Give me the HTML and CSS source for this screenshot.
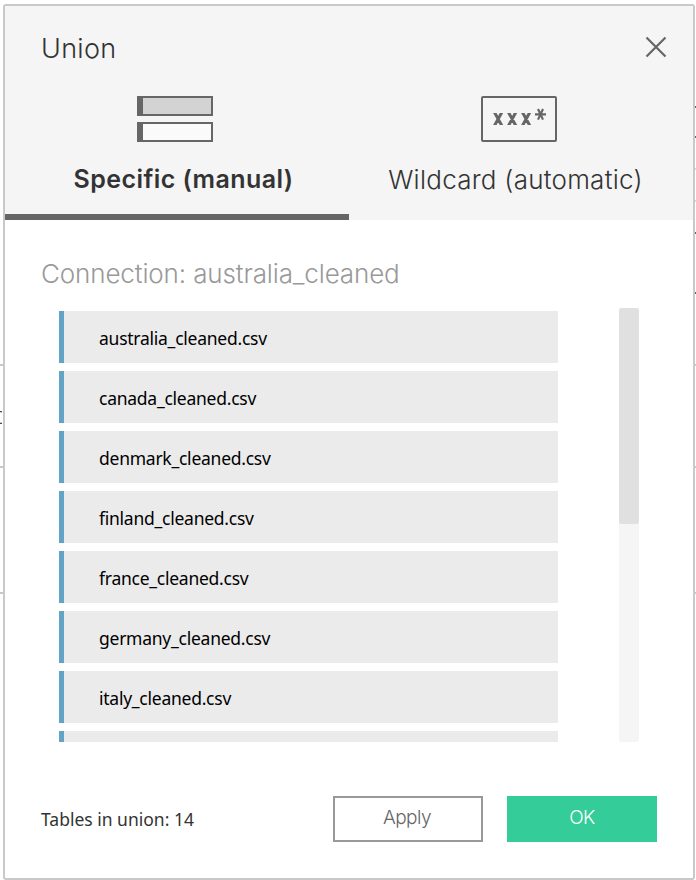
FILE: index.html
```html
<!DOCTYPE html>
<html lang="en">
<head>
<meta charset="utf-8">
<title>Union</title>
<link rel="stylesheet" href="styles.css">
</head>
<body>
<svg class="backdrop" width="696" height="880" viewBox="0 0 696 880" shape-rendering="crispEdges" aria-hidden="true">
  <path d="M0 365H696M0 467H696M0 593H696" stroke="#c8c8c8" stroke-width="2"/>
  <path d="M695 169H696M695 201H696" stroke="#d8d8d8" stroke-width="2"/>
  <path d="M695 107H696M695 137H696M695 233H696M695 293H696" stroke="#666" stroke-width="2"/>
  <path d="M0 411.500H2M0 423.500H2" stroke="#444b52" stroke-width="1"/>
  <path d="M0 412.500H2M0 422.500H2" stroke="#b8cbd8" stroke-width="1"/>
</svg>
<main class="dialog">
  <header class="head">
    <div class="title-row">
      <h1 class="title"><span>Union</span></h1>
      <button class="close" aria-label="Close"><svg width="22" height="22" viewBox="0 0 22 22"><path d="M1.500 1.500L20.500 20.500M20.500 1.500L1.500 20.500" stroke="#666" stroke-width="2.200" fill="none"/></svg></button>
    </div>
    <nav class="tabs">
      <div class="tab active">
        <svg width="76" height="46" viewBox="0 0 76 46" shape-rendering="crispEdges"><path d="M0 0H76V20H0zM0 26H76V46H0z" fill="#666"/><path d="M6 2H74V18H6z" fill="#d3d3d3"/><path d="M6 28H74V44H6z" fill="#fafafa"/></svg>
        <span class="label manual">Specific (manual)</span>
      </div>
      <div class="tab">
        <svg width="76" height="46" viewBox="0 0 76 46"><rect x="1" y="1" width="74" height="44" rx="1" fill="#f5f5f5" stroke="#666" stroke-width="2"/><path class="wild-mark" d="M13.300 16L21 30M21 16L13.300 30M27.300 16L35 30M35 16L27.300 30M41.300 16L49 30M49 16L41.300 30" clip-path="url(#mark-clip)"/><path d="M54 18.300H65M57 13L62 23.600M62 13L57 23.600" stroke="#666" stroke-width="2.200" fill="none"/><clipPath id="mark-clip"><rect x="10" y="17" width="42" height="12"/></clipPath></svg>
        <span class="label wildcard">Wildcard (automatic)</span>
      </div>
    </nav>
  </header>
  <section class="body">
    <h2 class="connection"><span>Connection: australia_cleaned</span></h2>
    <div class="list-area">
      <ul class="files">
        <li><span>australia_cleaned.csv</span></li>
        <li><span>canada_cleaned.csv</span></li>
        <li><span>denmark_cleaned.csv</span></li>
        <li><span>finland_cleaned.csv</span></li>
        <li><span>france_cleaned.csv</span></li>
        <li><span>germany_cleaned.csv</span></li>
        <li><span>italy_cleaned.csv</span></li>
        <li></li>
      </ul>
      <div class="scrollbar"><div class="thumb"></div></div>
    </div>
  </section>
  <footer class="foot">
    <span class="count">Tables in union: 14</span>
    <button class="btn apply">Apply</button>
    <button class="btn ok">OK</button>
  </footer>
</main>
</body>
</html>
```
FILE: styles.css
```css
* { box-sizing: border-box; }
body {
  margin: 0;
  height: 880px;
  overflow: hidden;
  background: #fff;
  color: #333;
  font-family: Inter, "Liberation Sans", sans-serif;
  font-weight: 300;
}
.backdrop { position: absolute; top: 0; left: 0; z-index: -1; }
.dialog {
  width: 692px;
  height: 876px;
  margin: 4px 0 0 3px;
  border: 2px solid #c9c9c9;
  border-radius: 3px;
  background: #fff;
  display: flex;
  flex-direction: column;
}
button { font: inherit; padding: 0; border: 0; background: none; }
h1, h2, ul { margin: 0; padding: 0; font-weight: 300; }
.head { height: 214px; background: #f5f5f5; }
.title-row {
  height: 90px;
  padding: 25px 26px 0 36px;
  display: flex;
  justify-content: space-between;
  align-items: flex-start;
}
.title { font-size: 27px; line-height: 36px; letter-spacing: 0.3px; }
.close { width: 22px; height: 22px; margin-top: 5px; }
.close svg { display: block; }
.tabs { display: grid; grid-template-columns: 344px 344px; height: 124px; }
.tab {
  display: flex;
  flex-direction: column;
  align-items: center;
  border-bottom: 6px solid transparent;
}
.tab svg { margin-right: 4px; }
.wild-mark { fill: none; stroke: #666; stroke-width: 3px; }
.tab.active { border-color: #666; }
.label { white-space: nowrap; line-height: 36px; margin-top: 19px; }
.manual { font-size: 25px; font-weight: 600; letter-spacing: 0.430px; margin-right: -13px; }
.wildcard { font-size: 26px; letter-spacing: 0.250px; margin: 20px 11px 0 0; }
.body { height: 522px; padding: 36px 54px 0; }
.connection { margin-left: -18px; font-size: 26px; line-height: 36px; letter-spacing: -0.130px; color: #999; white-space: nowrap; }
.list-area { display: flex; justify-content: space-between; height: 434px; margin-top: 16px; }
.files {
  width: 499px;
  height: 434px;
  padding-top: 3px;
  overflow: hidden;
  list-style: none;
  color: #000;
  font: 400 17.500px/54px "Noto Sans", sans-serif;
  letter-spacing: -0.250px;
}
.files li {
  height: 52px;
  margin-bottom: 8px;
  padding-left: 35px;
  border-left: 5px solid #62a3c6;
  background: #ebebeb;
}
.scrollbar { width: 20px; background: #f5f5f5; border-radius: 2px; }
.thumb { height: 216px; background: #e0e0e0; border-radius: 2px; }
.foot { display: flex; height: 136px; padding: 54px 36px 0; }
.count { width: 292px; font: 400 17.500px/46px "Noto Sans", sans-serif; }
.btn { width: 150px; height: 46px; font-size: 19px; line-height: 42px; padding-bottom: 2px; letter-spacing: -0.500px; }
.apply { border: 2px solid #999; margin-right: 24px; padding-right: 2px; color: #666; line-height: 38px; }
.ok { background: #34cc99; color: #fff; }
```
